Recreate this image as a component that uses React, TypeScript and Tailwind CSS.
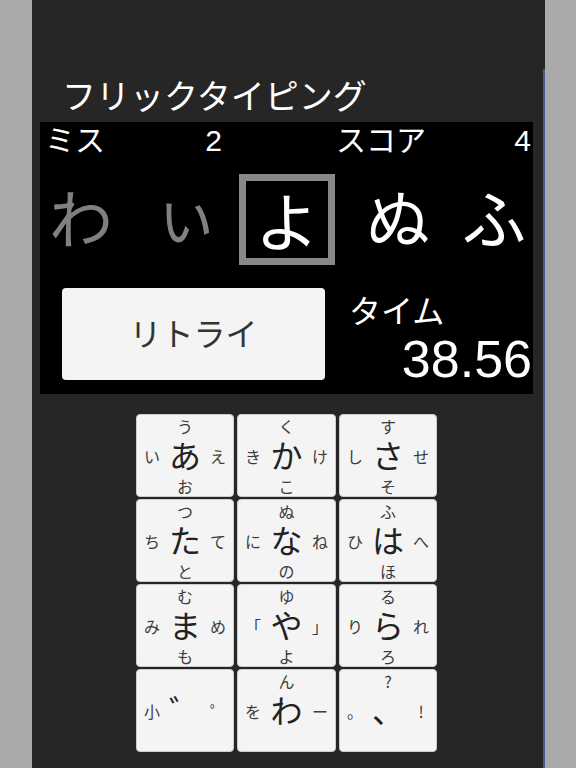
import React from "react";

type FlickKey = {
  c: string;
  t: string;
  l: string;
  r: string;
  b: string;
};

const keys: FlickKey[] = [
  { c: "あ", t: "う", l: "い", r: "え", b: "お" },
  { c: "か", t: "く", l: "き", r: "け", b: "こ" },
  { c: "さ", t: "す", l: "し", r: "せ", b: "そ" },
  { c: "た", t: "つ", l: "ち", r: "て", b: "と" },
  { c: "な", t: "ぬ", l: "に", r: "ね", b: "の" },
  { c: "は", t: "ふ", l: "ひ", r: "へ", b: "ほ" },
  { c: "ま", t: "む", l: "み", r: "め", b: "も" },
  { c: "や", t: "ゆ", l: "「", r: "」", b: "よ" },
  { c: "ら", t: "る", l: "り", r: "れ", b: "ろ" },
  { c: "゛", t: "", l: "小", r: "゜", b: "" },
  { c: "わ", t: "ん", l: "を", r: "ー", b: "" },
  { c: "、", t: "?", l: "。", r: "!", b: "" },
];

function Key({ k }: { k: FlickKey }) {
  return (
    <div className="flex h-[83px] flex-col rounded-[4px] border border-[#cdcdcd] bg-[#f4f4f4] text-[#3c3c3c]">
      <div className="flex h-[21px] items-center justify-center text-[16px] leading-none">
        {k.t}
      </div>
      <div className="flex h-[39px] items-center">
        <span className="w-[30px] text-center text-[16px] leading-none">{k.l}</span>
        <span className="flex-1 pb-[3px] text-center text-[32px] leading-none text-[#222]">{k.c}</span>
        <span className="w-[30px] text-center text-[16px] leading-none">{k.r}</span>
      </div>
      <div className="flex h-[21px] items-center justify-center text-[16px] leading-none">
        {k.b}
      </div>
    </div>
  );
}

export default function App() {
  return (
    <div className="flex h-[768px] w-[576px] overflow-hidden bg-[#aaaaaa] font-['Noto_Sans_CJK_JP',sans-serif]">
      <div className="ml-[32px] flex w-[513px] bg-[#262626]">
        <div className="flex w-[511px] flex-col">
          {/* title */}
          <div className="mt-[78px] h-[34px] pl-[30px] text-[34px] leading-[34px] text-white">
            フリックタイピング
          </div>

          {/* game panel */}
          <div className="ml-[8px] mt-[10px] flex h-[272px] w-[493px] flex-col bg-black text-white">
            <div className="flex h-[52px] items-start pt-[1px]">
              <div className="flex w-[185px] items-baseline justify-between pl-[5px] pr-[3px]">
                <span className="text-[30px] leading-[30px]">ミス</span>
                <span className="font-['Liberation_Sans',sans-serif] text-[30px] leading-[30px]">2</span>
              </div>
              <div className="ml-[110px] flex flex-1 items-baseline justify-between pl-[1px] pr-[2px]">
                <span className="text-[30px] leading-[30px]">スコア</span>
                <span className="font-['Liberation_Sans',sans-serif] text-[30px] leading-[30px]">4</span>
              </div>
            </div>

            <div className="flex h-[91px] items-center text-[64px] leading-none">
              <span className="w-[82px] pb-[10px] text-center text-[#808080]">わ</span>
              <span className="w-[117px] pb-[16px] pl-[12px] text-center text-[#808080]">ぃ</span>
              <div className="flex h-[91px] w-[96px] items-center justify-center border-[7px] border-[#888888]">
                <span className="pb-[3px]">よ</span>
              </div>
              <span className="w-[126px] pb-[10px] text-center">ぬ</span>
              <span className="w-[66px] pb-[10px] text-center">ふ</span>
            </div>

            <div className="mt-[23px] flex pl-[22px]">
              <button className="flex h-[92px] w-[263px] items-center justify-center rounded-[4px] bg-[#f4f4f4] pb-[4px] text-[32px] leading-none text-[#333333]">
                リトライ
              </button>
              <div className="flex flex-1 flex-col pl-[24px] pr-[1px]">
                <span className="mt-[5px] text-[32px] leading-[32px]">タイム</span>
                <span className="mt-[8px] self-end font-['Liberation_Sans',sans-serif] text-[52px] leading-none">
                  38.56
                </span>
              </div>
            </div>
          </div>

          {/* flick keyboard */}
          <div className="ml-[104px] mt-[20px] grid w-[301px] grid-cols-[98px_99px_98px] gap-x-[3px] gap-y-[2px]">
            {keys.map((k, i) => (
              <Key key={i} k={k} />
            ))}
          </div>
        </div>
        <div className="mt-[69px] w-[2px] bg-[#4a5a8c]" />
      </div>
    </div>
  );
}
